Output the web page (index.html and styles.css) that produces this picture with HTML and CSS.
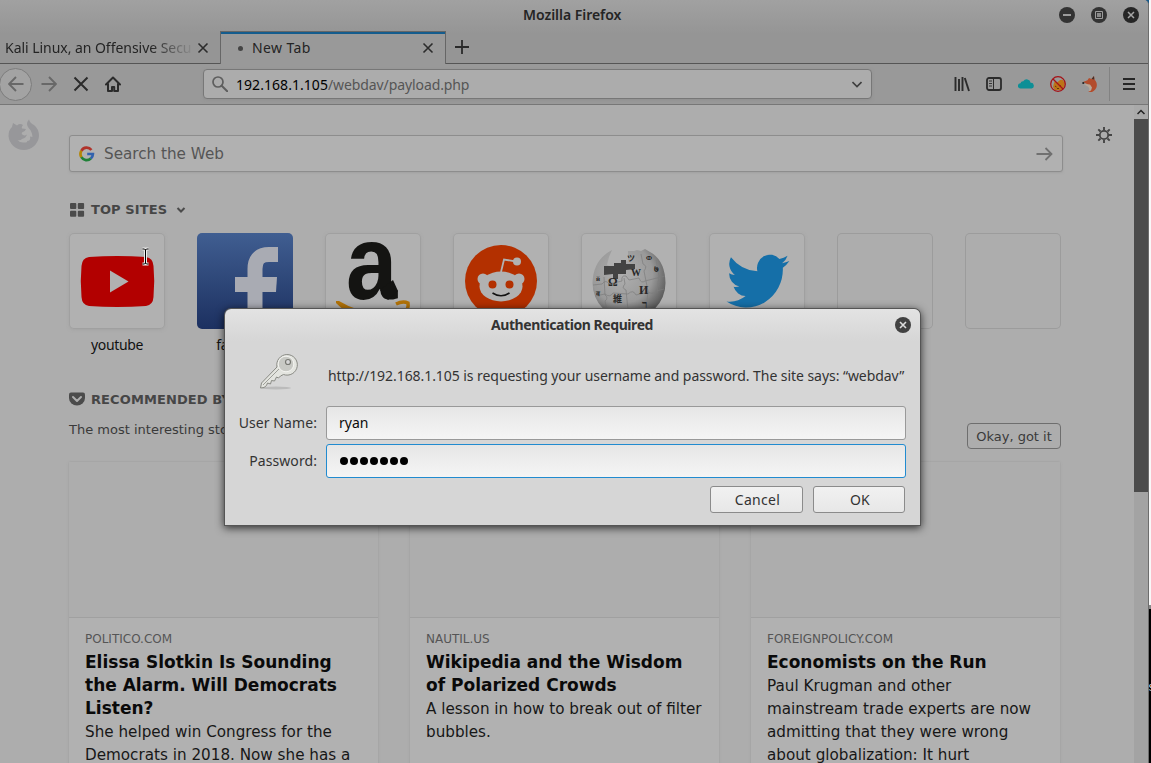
FILE: index.html
```html
<!DOCTYPE html>
<html lang="en">
<head>
<meta charset="utf-8">
<title>Mozilla Firefox</title>
<link rel="stylesheet" href="styles.css">
</head>
<body>
<div class="desktop">
<div class="window">
  <header class="chrome">
    <div class="titlebar">
      <span class="window-title">Mozilla Firefox</span>
      <div class="window-controls">
        <svg width="16" height="16" viewBox="0 0 16 16"><circle cx="8" cy="8" r="8" fill="#333"/><path d="M4 8h8" stroke="#9c9c9c" stroke-width="2"/></svg>
        <svg width="16" height="16" viewBox="0 0 16 16"><circle cx="8" cy="8" r="8" fill="#333"/><path d="M4.500 4.500h7v7h-7z" fill="none" stroke="#9c9c9c"/><path d="M6 6h4v4H6z" fill="#8a8a8a"/></svg>
        <svg width="16" height="16" viewBox="0 0 16 16"><circle cx="8" cy="8" r="8" fill="#262626"/><path d="M5 5l6 6M11 5l-6 6" stroke="#a5a5a5" stroke-width="1.500"/></svg>
      </div>
    </div>
    <div class="tabs">
      <div class="tab first"><span class="tab-label fade">Kali Linux, an Offensive Secu</span><svg width="12" height="12" viewBox="0 0 12 12"><path d="M1.500 1.500l9 9M10.500 1.500l-9 9" stroke="#2c2c2c" stroke-width="1.600"/></svg></div>
      <div class="tab active"><i class="dot"></i><span class="tab-label">New Tab</span><svg width="12" height="12" viewBox="0 0 12 12"><path d="M1.500 1.500l9 9M10.500 1.500l-9 9" stroke="#2c2c2c" stroke-width="1.600"/></svg></div>
      <div class="new-tab"><svg width="14" height="14" viewBox="0 0 14 14"><path d="M7 0v14M0 7h14" stroke="#2a2a2a" stroke-width="1.800"/></svg></div>
    </div>
    <div class="toolbar">
      <div class="nav">
        <span class="back"><svg width="16" height="16" viewBox="0 0 16 16"><path d="M15.500 8H1M8 1L1 8l7 7" fill="none" stroke="#686868" stroke-width="1.900"/></svg></span>
        <span class="btn"><svg width="16" height="16" viewBox="0 0 16 16"><path d="M.5 8H15M8 1l7 7-7 7" fill="none" stroke="#686868" stroke-width="1.900"/></svg></span>
        <span class="btn"><svg width="16" height="16" viewBox="0 0 16 16"><path d="M1.500 1.500l13 13M14.500 1.500l-13 13" stroke="#2b2b2b" stroke-width="2"/></svg></span>
        <span class="btn"><svg width="16" height="16" viewBox="0 0 16 16"><path d="M1 8.500L8 1.500l7 7M3 8v7h4v-4h2.200v4H13V8" fill="none" stroke="#2b2b2b" stroke-width="2" stroke-linejoin="round" stroke-linecap="round"/></svg></span>
      </div>
      <div class="urlbar">
        <svg width="16" height="16" viewBox="0 0 16 16"><circle cx="6" cy="6" r="5" fill="none" stroke="#5e5e5e" stroke-width="1.700"/><path d="M9.700 9.700l5.500 5.500" stroke="#5e5e5e" stroke-width="2" stroke-linecap="round"/></svg>
        <span class="url"><b>192.168.1.105</b>/webdav/payload.php</span>
        <svg class="drop" width="10" height="7" viewBox="0 0 10 7"><path d="M.5 1L5 5.500 9.500 1" fill="none" stroke="#3e3e3e" stroke-width="1.600"/></svg>
      </div>
      <div class="tools">
        <span class="btn"><svg width="16" height="16" viewBox="0 0 16 16"><path d="M1.500 1v14M5 3v12M8.500 1v14" stroke="#2b2b2b" stroke-width="1.900"/><path d="M10.800 2l4.200 13" stroke="#2b2b2b" stroke-width="1.900"/></svg></span>
        <span class="btn"><svg width="16" height="16" viewBox="0 0 16 16"><rect x="1" y="2" width="14" height="12" rx="2" fill="none" stroke="#2b2b2b" stroke-width="1.800"/><path d="M7.500 2v12" stroke="#2b2b2b"/><path d="M3 5h3M3 7.500h3M3 10h3" stroke="#2b2b2b" stroke-width=".9"/></svg></span>
        <span class="btn cloud"><svg width="16" height="11" viewBox="0 0 16 11"><path d="M2.500 10.500a2.600 2.600 0 0 1 0-5.200Q3 3 5.300 3.200a4 4 0 0 1 7.300 1.600 2.900 2.900 0 0 1 1 5.700z" fill="#0d8f96"/></svg></span>
        <span class="btn"><svg width="16" height="16" viewBox="0 0 16 16"><path d="M3 11l1-4 1-2 1.800 1.700L10 4l2.500-.2L15 7l-1 4-3 3H5z" fill="#bd7417"/><path d="M5 10l1.500 1M9 9.500l2 .5M7 12.500h2" stroke="#633508"/><circle cx="8" cy="8" r="7.300" fill="none" stroke="#a51217" stroke-width="1.300"/><path d="M3 3l10 10" stroke="#a51217" stroke-width="1.300"/></svg></span>
        <span class="btn"><svg width="16" height="16" viewBox="0 0 16 16"><path d="M1 6L5.500 4.300 7 2l2.500 1L12 0l.5 3.500c3.500 3.500 3.500 9.500-2.500 12.500H6c3-1.500 4-4 2-6.500z" fill="#b34c2c"/><path d="M1.500 8l6.500.5 2 3-1 3-2.500 1C8.500 13 7 10.500 4 9.500z" fill="#b8a898"/><circle cx="1.300" cy="7" r="1.100" fill="#222"/><path d="M9.500 3L12 0l.3 3.500z" fill="#443029"/></svg></span>
        <i class="sep"></i>
        <span class="menu"><svg width="12" height="12" viewBox="0 0 12 12"><path d="M0 1h12M0 6h12M0 11h12" stroke="#262626" stroke-width="1.900"/></svg></span>
      </div>
    </div>
  </header>

  <div class="viewport">
    <main class="page">
      <div class="search">
        <svg width="16" height="16" viewBox="0 0 16 16" fill="none" stroke-width="2.700"><path d="M2.400 4.800A6 6 0 0 1 12.400 4" stroke="#b0332b"/><path d="M2.400 4.800a6.200 6.200 0 0 0 0 6.400" stroke="#b38608"/><path d="M2.400 11.200a6 6 0 0 0 9.400 1.300" stroke="#1f8137"/><path d="M8.200 8h5.700a6 6 0 0 1-2.100 4.500" stroke="#3162ae"/></svg>
        <span>Search the Web</span>
        <svg class="go" width="17" height="14" viewBox="0 0 17 14"><path d="M.5 7H15M9.500 1l6 6-6 6" fill="none" stroke="#707070" stroke-width="1.800"/></svg>
      </div>

      <h2 class="heading top"><svg width="16" height="16" viewBox="0 0 16 16" fill="#4b4b4b"><rect x="1" y="2" width="6.300" height="6" rx="1"/><rect x="8.800" y="2" width="6.300" height="6" rx="1"/><rect x="1" y="9.700" width="6.300" height="6" rx="1"/><rect x="8.800" y="9.700" width="6.300" height="6" rx="1"/></svg><span>TOP SITES</span><svg class="caret" width="10" height="7" viewBox="0 0 10 7"><path d="M1.500 2L5 5.500 8.500 2" fill="none" stroke="#4b4b4b" stroke-width="2"/></svg></h2>

      <div class="sites">
        <div class="site"><div class="tile"><svg width="96" height="96" viewBox="0 0 96 96"><path d="M20 24Q48 22 77 24Q84 25 84.500 33Q86 48 84.500 64Q84 72 77 73Q48 75 20 73Q13 72 12.500 64Q11 48 12.500 33Q13 25 20 24z" fill="#b20000"/><path d="M41 37.500l18.500 11L41 59.500z" fill="#b1b1b1"/></svg></div><span>youtube</span></div>
        <div class="site"><div class="tile fb"><svg width="96" height="96" viewBox="0 0 96 96"><path d="M58 96V36Q58 21.500 72 21.500H81" fill="none" stroke="#a9abb3" stroke-width="15"/><path d="M38 44h42l-1 15H38z" fill="#a9abb3"/></svg></div><span>facebook</span></div>
        <div class="site"><div class="tile"><svg width="96" height="96" viewBox="0 0 96 96"><text class="amz" x="0" y="0" transform="translate(21 66) scale(.87 1)">a</text><path d="M55 57l13-10 5 11-10 9z" fill="#141412"/><path d="M11 68l3 0q28 17 57 7l2 3q-34 20-62-8z" fill="#b27308"/><path d="M71 71q7-3.500 12-1 1 5-4 12" fill="none" stroke="#b27308" stroke-width="3.500"/></svg></div><span>amazon</span></div>
        <div class="site"><div class="tile"><svg width="96" height="96" viewBox="0 0 96 96"><circle cx="48" cy="48" r="36" fill="#b33000"/><g fill="#b1b1b1"><circle cx="30" cy="46" r="5.500"/><circle cx="66" cy="46" r="5.500"/><ellipse cx="48" cy="53.500" rx="21.500" ry="15"/><circle cx="64" cy="28.500" r="4"/></g><path d="M48 39l3-12.500 12 2" fill="none" stroke="#b1b1b1" stroke-width="1.800"/><circle cx="39.500" cy="51.500" r="4" fill="#b33000"/><circle cx="56.500" cy="51.500" r="4" fill="#b33000"/><path d="M39.500 60q8.500 5.500 17 0" fill="none" stroke="#111" stroke-width="1.600"/></svg></div><span>reddit</span></div>
        <div class="site"><div class="tile"><svg width="96" height="96" viewBox="0 0 96 96"><defs><radialGradient id="globe" cx=".4" cy=".35" r=".65"><stop offset="0" stop-color="#b0b0b0"/><stop offset=".65" stop-color="#999"/><stop offset="1" stop-color="#5c5c5c"/></radialGradient></defs><path d="M31 17Q12 27 11.500 50a36.500 36.500 0 0 0 73 0Q84 27 69 19l-5-3-4 2-4-1-3 1-6 0v10l-8 2-5 5-8-3 2-8z" fill="url(#globe)"/><path d="M23 33h10v-3h7v-3h5v4h9v5l-9 1v4h-8v5h-5v-5l-9 1z" fill="#434343"/><g fill="none" stroke="#7c7c7c" stroke-width=".7"><path d="M12 52l9-1q4-5 7 0l13-3q-1-6 4-5l3 4 10-2q2 6 6 3l20-5M14 63l10-2q5 4 8-1l15 1q5-5 8 1l12-3q5 3 8-1l8-2M23 44l1 18q4 3 0 6l2 9M43 45l1 6q-4 4 1 6l2 20M60 21l2 10q5 2 1 7l4 20-2 20M75 27l3 16-2 17"/></g><g class="wiki"><text x="27" y="53" font-size="12">Ω</text><text x="50" y="43" font-size="10">W</text><text x="58" y="61" font-size="12">И</text><text x="32" y="69" font-size="9">維</text><text x="61" y="75" font-size="11">ר</text><text x="15" y="48" font-size="7">й</text><text x="15" y="63" font-size="7">व</text><text x="73" y="39" font-size="9">७</text><text x="46" y="28" font-size="8">ツ</text><text x="65" y="27" font-size="7">Ф</text></g></svg></div><span>wikipedia</span></div>
        <div class="site"><div class="tile"><svg width="96" height="96" viewBox="0 0 96 96"><path transform="translate(17.500 15.500) scale(2.620 2.720)" d="M24 4.600a10 10 0 0 1-2.800.8 5 5 0 0 0 2.100-2.700 10 10 0 0 1-3.100 1.200 4.900 4.900 0 0 0-8.400 4.500A14 14 0 0 1 1.700 3.200a4.900 4.900 0 0 0 1.500 6.500 5 5 0 0 1-2.200-.6 4.900 4.900 0 0 0 3.900 4.900 5 5 0 0 1-2.200.1 4.900 4.900 0 0 0 4.600 3.400A10 10 0 0 1 0 19.500a14 14 0 0 0 21.500-12.400A10 10 0 0 0 24 4.600z" fill="#156fa8"/></svg></div><span>twitter</span></div>
        <div class="site"><div class="tile empty"></div></div>
        <div class="site"><div class="tile empty"></div></div>
      </div>

      <h2 class="heading rec"><svg width="16" height="16" viewBox="0 0 16 16"><path d="M2 1.500h12q2 0 2 2V7A8 7.500 0 0 1 0 7V3.500q0-2 2-2z" fill="#4b4b4b"/><path d="M4 6l4 4 4-4" fill="none" stroke="#adadad" stroke-width="2" stroke-linecap="round" stroke-linejoin="round"/></svg><span>RECOMMENDED BY</span></h2>
      <div class="intro"><span>The most interesting stories</span><button class="okay">Okay, got it</button></div>

      <div class="cards">
        <article class="card"><div class="thumb"></div><div class="copy"><small>POLITICO.COM</small><h3>Elissa Slotkin Is Sounding<br>the Alarm. Will Democrats<br>Listen?</h3><p>She helped win Congress for the<br>Democrats in 2018. Now she has a</p></div></article>
        <article class="card"><div class="thumb"></div><div class="copy"><small>NAUTIL.US</small><h3>Wikipedia and the Wisdom<br>of Polarized Crowds</h3><p>A lesson in how to break out of filter<br>bubbles.</p></div></article>
        <article class="card"><div class="thumb"></div><div class="copy"><small>FOREIGNPOLICY.COM</small><h3>Economists on the Run</h3><p>Paul Krugman and other<br>mainstream trade experts are now<br>admitting that they were wrong<br>about globalization: It hurt</p></div></article>
      </div>
    </main>
    <div class="scrollbar"><div class="scroll-up"><svg width="8" height="6" viewBox="0 0 8 6"><path d="M.5 5L4 1.500 7.500 5" fill="none" stroke="#222" stroke-width="1.500"/></svg></div><div class="thumb-bar"></div></div>
  </div>

  <svg class="firefox-mark" width="32" height="32" viewBox="0 0 32 32"><path d="M5 4L9 6.500Q12 4 15 6Q13 8 14 9.500L18 10Q17 13 14 13.500Q13 15 15 16Q17 17 19 15.500Q18 19 14 20Q12 22 9.500 21Q12 24 16 23.500Q20 23.500 19 22Q23 22 22 17.500L24.500 18Q24 12 21 9.500Q17 5 21 .5Q22 4 26 6Q31 10 31 17A15.300 15.300 0 0 1 .5 17Q.5 11 4 8z" fill="#97979a"/></svg>
  <svg class="gear" width="16" height="16" viewBox="0 0 16 16"><circle cx="8" cy="8" r="4.200" fill="none" stroke="#454545" stroke-width="1.800"/><path d="M8 0v3M8 13v3M0 8h3M13 8h3M2.300 2.300l2.200 2.200M11.500 11.500l2.200 2.200M2.300 13.700l2.200-2.200M11.500 4.500l2.200-2.200" stroke="#454545" stroke-width="1.900"/></svg>
  <svg class="pointer" width="9" height="19" viewBox="0 0 9 19"><path d="M1.500 2h2l1 1 1-1h2M4.500 2.500v14M1.500 17h2l1-1 1 1h2" fill="none" stroke="#eee" stroke-width="3"/><path d="M1.500 2h2l1 1 1-1h2M4.500 2.500v14M1.500 17h2l1-1 1 1h2" fill="none" stroke="#000" stroke-width="1"/></svg>

  <section class="dialog">
    <div class="dialog-title"><span>Authentication Required</span><svg width="16" height="16" viewBox="0 0 16 16"><circle cx="8" cy="8" r="8" fill="#414141"/><path d="M5 5l6 6M11 5l-6 6" stroke="#ddd" stroke-width="1.600"/></svg></div>
    <div class="message">
      <svg width="40" height="40" viewBox="0 0 40 40"><ellipse cx="17" cy="37" rx="15" ry="1.500" fill="#bbb"/><path d="M1.500 37l1-5L18 16a10.300 10.300 0 1 1 6.500 7.500l-3 1.500-2 2-2-1-2 4-3-.5-1 3.500-3-1-1 2.500-2.500 2z" fill="#e3e4df" stroke="#898a84"/><circle cx="27" cy="13" r="7.800" fill="#c8c9c4" stroke="#f4f4f1"/><circle cx="29" cy="11" r="2.500" fill="#d6d6d6" stroke="#777872" stroke-width="1.200"/><path d="M4 34L20 18" stroke="#9d9e98"/></svg>
      <p>http://192.168.1.105 is requesting your username and password. The site says: “webdav”</p>
    </div>
    <div class="form">
      <label>User Name:</label><div class="field"><span>ryan</span></div>
      <label>Password:</label><div class="field focus"><i></i><i></i><i></i><i></i><i></i><i></i><i></i></div>
    </div>
    <div class="actions"><button><span>Cancel</span></button><button class="ok"><span>OK</span></button></div>
  </section>
</div>
<aside class="behind"><div class="light"></div><div class="terminal">s</div></aside>
</div>
</body>
</html>
```
FILE: styles.css
```css
* { box-sizing: border-box; }
body { margin: 0; overflow: hidden; background: #000; font-family: "Noto Sans", sans-serif; font-size: 14px; color: #242424; }
svg { display: block; flex: none; }
h2, h3, p { margin: 0; }
button { font: inherit; color: inherit; padding: 0; }
.desktop { display: flex; width: 1151px; height: 763px; overflow: hidden; background: #155a8c; }
.window { position: relative; display: flex; flex-direction: column; width: 1149px; height: 763px; border-right: 1px solid #6d6d6d; border-radius: 0 5px 0 0; background: #adadad; overflow: hidden; }
.behind { width: 2px; display: flex; flex-direction: column; }
.light { height: 609px; background: #f8f8f8; border-bottom: 4px solid #888; }
.terminal { flex: 1; background: #000; color: #ddd; font: 12px/16px "Liberation Mono", monospace; padding-top: 71px; overflow: hidden; text-indent: -1px; }

.chrome { height: 105px; flex: none; background: linear-gradient(#a1a1a1, #959595 34px, #959595 63px, #999 64px); border-bottom: 1px solid #777; }
.titlebar { height: 31px; display: flex; align-items: center; padding: 0 9px 1px 523px; }
.window-title { font-weight: 600; white-space: nowrap; letter-spacing: -.03px; padding-bottom: 2px; }
.window-controls { margin-left: auto; display: flex; gap: 16px; }
.tabs { display: flex; height: 33px; }
.tab { display: flex; align-items: center; border-bottom: 1px solid #555; }
.tab.first { width: 220px; padding: 2px 11px 0 5px; justify-content: space-between; }
.tab-label { white-space: nowrap; letter-spacing: .4px; overflow: hidden; padding-bottom: 2px; }
.fade { width: 188px; letter-spacing: -.04px; -webkit-mask-image: linear-gradient(90deg, #000 145px, transparent 190px); }
.tab.active { width: 226px; padding: 0 11px 0 17px; border: 1px solid #666; border-bottom: 0; box-shadow: inset 0 2px #145c8d; background: #999; }
.tab.active svg { margin-left: auto; }
.dot { width: 5px; height: 5px; margin-right: 9px; border-radius: 50%; background: #444; }
.new-tab { flex: 1; border-bottom: 1px solid #555; padding: 9px 0 0 9px; }

.toolbar { display: flex; align-items: center; height: 40px; }
.nav { display: flex; align-items: center; width: 203px; }
.btn { width: 32px; height: 32px; display: flex; align-items: center; justify-content: center; }
.cloud { padding-bottom: 2px; }
.back { width: 33px; height: 33px; margin-left: -1px; margin-right: 1px; border: 1px solid #7d7d7d; border-radius: 50%; display: flex; align-items: center; justify-content: center; background: #a3a3a3; }
.urlbar { width: 669px; height: 30px; border: 1px solid #777; border-radius: 4px; background: #acacac; display: flex; align-items: center; padding: 0 9px 0 8px; box-shadow: 0 1px 3px #8888; }
.url { margin-left: 8px; color: #555; white-space: nowrap; letter-spacing: -.1px; }
.url b { font-weight: 400; color: #000; letter-spacing: .05px; }
.drop { margin-left: auto; }
.tools { margin-left: 74px; display: flex; align-items: center; }
.sep { width: 1px; height: 34px; background: #828282; margin-left: 3px; }
.menu { margin-left: 13px; }

.viewport { flex: 1; display: flex; min-height: 0; }
.page { width: 1134px; padding: 30px 71px 0 69px; font-family: "DejaVu Sans", sans-serif; background: #adadad; }
.search { width: 994px; height: 37px; border: 1px solid #8d8d8d; border-radius: 3px; background: #b1b1b1; box-shadow: 0 1px 2px #9999; display: flex; align-items: center; padding: 0 9px; font-size: 15.200px; color: #555; }
.search span { margin-left: 9px; }
.go { margin-left: auto; }
.heading { display: flex; align-items: center; height: 18px; font-size: 13px; color: #464646; white-space: nowrap; letter-spacing: .1px; }
.heading span { margin-left: 6px; }
.top { margin-top: 28px; }
.caret { margin-left: 9px; }
.sites { display: flex; gap: 32px; margin-top: 15px; height: 130px; }
.site { width: 96px; font-family: "Noto Sans", sans-serif; color: #111; text-align: center; letter-spacing: -.35px; }
.tile { width: 96px; height: 96px; border-radius: 5px; background: #b1b1b1; box-shadow: inset 0 0 0 1px #a0a0a0, 0 1px 3px #9b9b9b88; margin-bottom: 6px; overflow: hidden; }
.fb { background: linear-gradient(#405e91, #1c3060); box-shadow: none; }
.empty { background: transparent; box-shadow: inset 0 0 0 1px #9c9c9c; }
.amz { font: bold 106px "Liberation Sans", sans-serif; fill: #141412; letter-spacing: 0; }
.wiki { font-family: "Liberation Serif", "Noto Sans CJK JP", serif; fill: #282828; font-weight: bold; }
.rec { margin-top: 27px; }
.intro { display: flex; align-items: center; justify-content: space-between; width: 992px; height: 26px; margin-top: 15px; font-size: 13px; color: #3a3a3a; }
.intro > span { margin-top: -13px; }
.okay { width: 94px; height: 26px; border: 1px solid #6e6e6e; border-radius: 4px; background: transparent; font-size: 13px; }
.cards { display: flex; gap: 32px; margin-top: 13px; }
.card { width: 309px; height: 320px; background: #b1b1b1; border-radius: 3px; box-shadow: 0 0 0 1px #a6a6a6, 0 1px 3px #9e9e9e88; }
.thumb { height: 156px; border-bottom: 1px solid #a0a0a0; background: #adadad; }
.copy { padding: 12px 16px; white-space: nowrap; }
.copy small { display: block; font-size: 12px; line-height: 18px; color: #555; margin-bottom: 3px; }
.copy h3 { font-size: 17px; line-height: 23px; color: #0a0a0a; }
.copy p { font-size: 15.200px; line-height: 23px; color: #171717; margin-top: 1px; }
.scrollbar { width: 14px; background: #a3a3a3; }
.scroll-up { height: 14px; background: #a9a9a9; display: flex; align-items: center; justify-content: center; }
.thumb-bar { height: 373px; background: #4b4b4b; }

.firefox-mark { position: absolute; left: 8px; top: 119px; }
.gear { position: absolute; left: 1096px; top: 127px; }
.pointer { position: absolute; left: 141px; top: 247px; }

.dialog { position: absolute; left: 225px; top: 309px; width: 695px; height: 216px; border-radius: 6px 6px 0 0; background: linear-gradient(#e3e3e3, #d6d6d6 32px); box-shadow: 0 0 0 1px #555, 0 2px 8px 1px #000b; color: #333; }
.dialog-title { height: 32px; display: flex; align-items: center; padding: 0 9px 0 266px; font-weight: 700; white-space: nowrap; letter-spacing: -.43px; }
.dialog-title span { padding-bottom: 2px; }
.dialog-title svg { margin-left: auto; }
.message { display: flex; height: 65px; padding: 10px 0 0 34px; }
.message p { margin: 15px 0 0 29px; white-space: nowrap; line-height: 20px; letter-spacing: -.058px; }
.form { display: grid; grid-template-columns: 92px 580px; grid-auto-rows: 34px; gap: 4px 9px; align-items: center; }
.form label { text-align: right; padding-bottom: 2px; letter-spacing: .08px; }
.field { height: 34px; border: 1px solid #999; border-radius: 3px; background: linear-gradient(#e6e6e6, #f5f5f5); padding-left: 12px; display: flex; align-items: center; color: #0b0b0b; }
.field span { padding-bottom: 2px; }
.focus { border-color: #218bd0; gap: 2px; padding-bottom: 1px; }
.field i { width: 8px; height: 8px; border-radius: 50%; background: #000; }
.focus i:first-child { margin-left: 1px; }
.actions { display: flex; justify-content: flex-end; gap: 10px; padding: 8px 15px 0 0; }
.actions button { width: 93px; height: 27px; border: 1px solid #8b8b8b; border-radius: 3px; background: linear-gradient(#f1f1f1, #e7e7e7); display: flex; align-items: center; justify-content: center; letter-spacing: .3px; }
.actions button.ok { width: 92px; }
.actions span { margin-left: 2px; padding-bottom: 1px; }
```
